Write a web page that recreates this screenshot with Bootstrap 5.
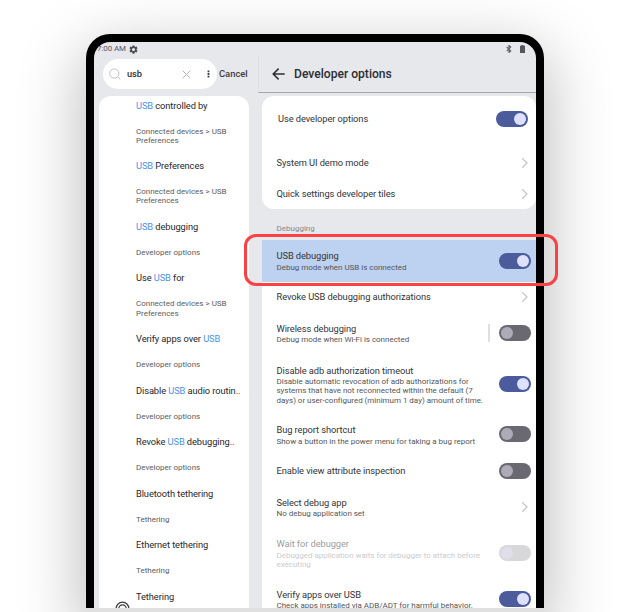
<!DOCTYPE html>
<html lang="en">
<head>
<meta charset="utf-8">
<meta name="viewport" content="width=device-width, initial-scale=1">
<title>Developer options</title>
<link href="https://cdn.jsdelivr.net/npm/bootstrap@5.3.0/dist/css/bootstrap.min.css" rel="stylesheet">
<style>
body{font-family:Roboto,"Liberation Sans",sans-serif;font-size:9px;color:#333438;background:#fff;height:612px;overflow:hidden}
.stage{height:612px;padding:34px 0 0 86px}
.shade{width:458px;height:578px;border-radius:24px 24px 0 0;background:#e0e0e0;box-shadow:0 20px 62px 6px rgba(0,0,0,.25)}
.device{height:574px;border:8px solid #000;border-bottom:0;border-radius:24px 24px 0 0;background:#e7e8ec}
.statusbar{height:14px;font-size:8px;color:#55565a;padding:0 11px 0 3px}
.statusbar .clock{letter-spacing:-.1px;margin-right:-1px}
.left-pane{width:164px}
.searchbar{height:39px;margin-left:9px;padding-bottom:3px}
.pill{width:114px;height:30px;border-radius:15px;background:#fff;padding:0 7px 0 6px}
.query{font-weight:500;font-size:9.3px;letter-spacing:-.15px;margin-left:6px}
.cancel-link{font-size:9.4px;font-weight:500;color:#3c3d41;padding-left:2px}
.results{margin:1px 9px 0 4.5px;border-radius:12px 12px 0 0;background:#fff;padding:3.5px 0 0 37.5px;height:512px;overflow:hidden}
.hit .t{line-height:12px;font-size:9.3px;letter-spacing:-.09px;color:#26272b;margin-bottom:15px;white-space:nowrap}
.hit .s{line-height:9.2px;font-size:8px;color:#5c5d62;margin-bottom:15.3px;width:98px}
.hit b{font-weight:400;color:#4a93e8}
.teth{margin:10px 6px 0 -21px}
.right-pane{width:278px}
.topbar{height:37px;border-left:1px solid #dfe0e4;border-bottom:1px solid #a5a6aa;padding-left:13px;font-size:12.1px;font-weight:500;color:#2c2d31}
.back-arrow{margin-right:9px}
.group-card{margin:3px 0 0 4px;border-radius:12px;background:#fff;height:113px}
.setting{padding:0 5px 0 14.5px;white-space:nowrap}
.setting .t{font-size:9.3px;letter-spacing:-.08px;line-height:13.4px;color:#333438}
.setting .s{font-size:8px;letter-spacing:-.02px;line-height:9.2px;color:#55565a}
.h-use{height:46px;padding-left:16px;padding-right:8px;margin-bottom:5.5px}
.h-nav{height:31px}
.h-revoke{height:31px}.h-wifi{height:41px}.h-adb{height:61.4px}.h-bug{height:39.2px}.h-view{height:34px}.h-select{height:38px}.h-wait{height:54.4px}.h-verify{height:37.8px}
.section-label{height:30.5px;margin-left:4px;padding:12.8px 0 0 14.5px;font-size:8px;line-height:14px;color:#85868b}
.list-panel{margin-left:4px;background:#fff}
.usb-row{height:42px;background:#bdd1f0}
.callout-ring{position:absolute;left:-18px;top:-5.5px;width:314px;height:52px;border:3px solid #fa4245;border-radius:12px}
.toggle{width:32px;height:16px;border-radius:8px;background:#4b5b9b;padding:0 2px}
.toggle i{width:12px;height:12px;border-radius:50%;background:#dde1fd}
.toggle.off{background:#6a6972}.toggle.off i{background:#aeaab8}
.toggle.dim{background:#d8d8db}.toggle.dim i{background:#e0deea}
.is-disabled .t{color:#9c9da1}.is-disabled .s{color:#cbccd0}
.split{width:2px;height:18px;background:#dedfe2;margin-right:9px}
.chev{margin-right:1px}
.screen-clip{height:566px;border-radius:16px 16px 0 0;clip-path:inset(0 -30px 0 0)}
</style>
<script src="https://cdn.jsdelivr.net/npm/bootstrap@5.3.0/dist/js/bootstrap.bundle.min.js"></script>
</head>
<body>
<svg class="d-none">
  <symbol id="chev" viewBox="0 0 10 12"><path d="M2.200 1.300 7 6l-4.800 4.700" fill="none" stroke="#c6c7ca" stroke-width="1.300"/></symbol>
</svg>
<main class="stage"><div class="shade"><div class="device"><div class="screen-clip">
  <header class="statusbar d-flex align-items-center justify-content-between">
    <div class="d-flex align-items-center gap-1"><span class="clock">7:00 AM</span>
      <svg width="9" height="9" viewBox="0 0 24 24" fill="#4b4c50"><path fill-rule="evenodd" d="m9.500 1-.6 3.300-1.900 1.100-3.200-1.200-2.600 4.500L3.800 11v2l-2.600 2.300 2.600 4.500L7 18.700l1.900 1.100.6 3.200h5l.6-3.200 1.900-1.100 3.200 1.100 2.600-4.500-2.600-2.300v-2l2.600-2.300-2.600-4.500L17 5.400l-1.900-1.100-.6-3.300zM12 7.800a4.200 4.200 0 1 1 0 8.400 4.200 4.200 0 0 1 0-8.400z"/></svg>
    </div>
    <div class="d-flex align-items-center gap-2">
      <svg width="6" height="8" viewBox="0 0 12 16" fill="none" stroke="#5f6064" stroke-width="2.200"><path d="m1.500 4 8 8L6 15V1l3.500 3-8 8"/></svg>
      <svg width="5" height="8" viewBox="0 0 5 8" fill="#55565a"><path d="M1.500 0h2v.8H5V8H0V.8h1.500z"/></svg>
    </div>
  </header>
  <div class="d-flex">
    <section class="left-pane flex-shrink-0">
      <div class="searchbar d-flex align-items-center">
        <div class="pill d-flex align-items-center flex-shrink-0">
          <svg width="12" height="12" viewBox="0 0 12 12" fill="none" stroke="#c0c1c4"><circle cx="5.300" cy="5.500" r="4.600"/><path d="m8.700 8.900 2.600 2.500"/></svg>
          <span class="query flex-grow-1">usb</span>
          <svg width="9" height="9" viewBox="0 0 9 9" stroke="#b5b6b9"><path d="m.7.700 7.600 7.600m0-7.600L.7 8.300"/></svg>
          <svg class="ms-3" width="3" height="8" viewBox="0 0 3 8" fill="#3c3d41"><path d="M.6.400h1.800v1.800H.6zM.6 3.100h1.800v1.800H.6zM.6 5.800h1.800v1.800H.6z"/></svg>
        </div>
        <span class="cancel-link">Cancel</span>
      </div>
      <div class="results">
        <div class="hit"><div class="t"><b>USB</b> controlled by</div><div class="s">Connected devices &gt; USB<br>Preferences</div></div>
        <div class="hit"><div class="t"><b>USB</b> Preferences</div><div class="s">Connected devices &gt; USB<br>Preferences</div></div>
        <div class="hit"><div class="t"><b>USB</b> debugging</div><div class="s">Developer options</div></div>
        <div class="hit"><div class="t">Use <b>USB</b> for</div><div class="s">Connected devices &gt; USB<br>Preferences</div></div>
        <div class="hit"><div class="t">Verify apps over <b>USB</b></div><div class="s">Developer options</div></div>
        <div class="hit"><div class="t">Disable <b>USB</b> audio routin..</div><div class="s">Developer options</div></div>
        <div class="hit"><div class="t">Revoke <b>USB</b> debugging..</div><div class="s">Developer options</div></div>
        <div class="hit"><div class="t">Bluetooth tethering</div><div class="s">Tethering</div></div>
        <div class="hit"><div class="t">Ethernet tethering</div><div class="s">Tethering</div></div>
        <div class="hit d-flex"><svg class="teth flex-shrink-0" width="15" height="15" viewBox="0 0 15 15" fill="none" stroke="#3c3d41" stroke-width="1.200"><circle cx="7.500" cy="7.500" r="6.300"/><circle cx="7.500" cy="7.500" r="3.700"/></svg><div class="t">Tethering</div></div>
      </div>
    </section>
    <section class="right-pane flex-shrink-0">
      <div class="topbar d-flex align-items-center">
        <svg class="back-arrow" width="13" height="12" viewBox="0 0 13 12" fill="none" stroke="#2c2d31" stroke-width="1.500"><path d="M12.700 6H1.200M6.600.600 1.200 6l5.400 5.400"/></svg>
        <span>Developer options</span>
      </div>
      <div class="group-card">
        <div class="setting h-use d-flex align-items-center justify-content-between"><div class="t">Use developer options</div><div class="toggle d-flex align-items-center justify-content-end"><i></i></div></div>
        <div class="setting h-nav d-flex align-items-center justify-content-between"><div class="t">System UI demo mode</div><svg class="chev" width="10" height="12"><use href="#chev"/></svg></div>
        <div class="setting h-nav d-flex align-items-center justify-content-between"><div class="t">Quick settings developer tiles</div><svg class="chev" width="10" height="12"><use href="#chev"/></svg></div>
      </div>
      <div class="section-label">Debugging</div>
      <div class="list-panel">
        <div class="setting usb-row position-relative d-flex align-items-center justify-content-between"><div><div class="t">USB debugging</div><div class="s">Debug mode when USB is connected</div></div><div class="toggle d-flex align-items-center justify-content-end"><i></i></div><div class="callout-ring"></div></div>
        <div class="setting h-revoke d-flex align-items-center justify-content-between"><div class="t">Revoke USB debugging authorizations</div><svg class="chev" width="10" height="12"><use href="#chev"/></svg></div>
        <div class="setting h-wifi d-flex align-items-center"><div class="me-auto"><div class="t">Wireless debugging</div><div class="s">Debug mode when Wi-Fi is connected</div></div><div class="split"></div><div class="toggle off d-flex align-items-center"><i></i></div></div>
        <div class="setting h-adb d-flex align-items-center justify-content-between"><div><div class="t">Disable adb authorization timeout</div><div class="s">Disable automatic revocation of adb authorizations for<br>systems that have not reconnected within the default (7<br>days) or user-configured (minimum 1 day) amount of time.</div></div><div class="toggle d-flex align-items-center justify-content-end"><i></i></div></div>
        <div class="setting h-bug d-flex align-items-center justify-content-between"><div><div class="t">Bug report shortcut</div><div class="s">Show a button in the power menu for taking a bug report</div></div><div class="toggle off d-flex align-items-center"><i></i></div></div>
        <div class="setting h-view d-flex align-items-center justify-content-between"><div class="t">Enable view attribute inspection</div><div class="toggle off d-flex align-items-center"><i></i></div></div>
        <div class="setting h-select d-flex align-items-center justify-content-between"><div><div class="t">Select debug app</div><div class="s">No debug application set</div></div><svg class="chev" width="10" height="12"><use href="#chev"/></svg></div>
        <div class="setting h-wait is-disabled d-flex align-items-center justify-content-between"><div><div class="t">Wait for debugger</div><div class="s">Debugged application waits for debugger to attach before<br>executing</div></div><div class="toggle dim d-flex align-items-center"><i></i></div></div>
        <div class="setting h-verify d-flex align-items-center justify-content-between"><div><div class="t">Verify apps over USB</div><div class="s">Check apps installed via ADB/ADT for harmful behavior.</div></div><div class="toggle d-flex align-items-center justify-content-end"><i></i></div></div>
      </div>
    </section>
  </div>
</div></div></div></main>
</body>
</html>
